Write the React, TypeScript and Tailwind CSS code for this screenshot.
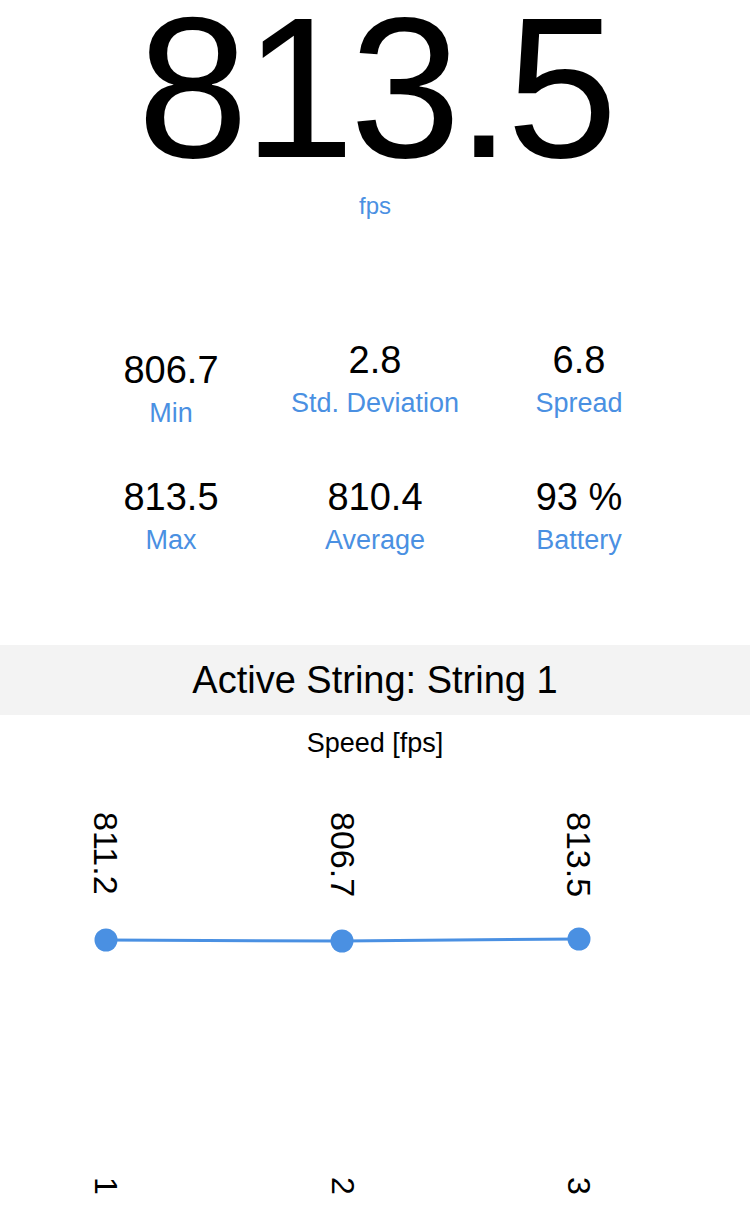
import React from "react";

const stats = [
  [
    { v: "806.7", l: "Min", shift: true },
    { v: "2.8", l: "Std. Deviation", shift: false },
    { v: "6.8", l: "Spread", shift: false },
  ],
  [
    { v: "813.5", l: "Max", shift: false },
    { v: "810.4", l: "Average", shift: false },
    { v: "93 %", l: "Battery", shift: false },
  ],
];

const points = [
  { v: "811.2", x: "1" },
  { v: "806.7", x: "2" },
  { v: "813.5", x: "3" },
];

export default function App() {
  return (
    <div className="w-[750px] h-[1213px] overflow-hidden bg-white text-black font-['Liberation_Sans',Arial,sans-serif]">
      {/* Big value */}
      <div className="h-[176px] text-center text-[200px] leading-[176px] tracking-[-5px]">
        813.5
      </div>
      <div className="mt-[16px] text-center text-[24px] leading-[28px] text-[#4a90e2]">fps</div>

      {/* Stats */}
      <div className="mt-[118px] w-[612px] mx-auto flex flex-col">
        {stats.map((row, ri) => (
          <div key={ri} className={`grid grid-cols-3 items-start ${ri === 1 ? "mt-[46px]" : ""}`}>
            {row.map((s) => (
              <div
                key={s.l}
                className={`flex flex-col items-center ${s.shift ? "mt-[10px]" : ""}`}
              >
                <div className="text-[38px] leading-[44px] whitespace-nowrap">{s.v}</div>
                <div className="mt-[5px] text-[27px] leading-[32px] text-[#4a90e2] whitespace-nowrap">
                  {s.l}
                </div>
              </div>
            ))}
          </div>
        ))}
      </div>

      {/* Active string band */}
      <div className="mt-[89px] h-[70px] bg-[#f3f3f3] flex items-center justify-center text-[38px] leading-[70px]">
        Active String: String 1
      </div>

      <div className="mt-[12px] text-center text-[27px] leading-[32px]">Speed [fps]</div>

      {/* Chart */}
      <div className="relative h-[454px]">
        <svg className="absolute inset-0" width="750" height="454" viewBox="0 0 750 454">
          <polyline
            points="106,181 342,182 579,180"
            fill="none"
            stroke="#4a90e2"
            strokeWidth="3"
          />
          <circle cx="106" cy="181" r="11.5" fill="#4a90e2" />
          <circle cx="342" cy="182" r="11.5" fill="#4a90e2" />
          <circle cx="579" cy="180" r="11.5" fill="#4a90e2" />
        </svg>
        <div className="relative h-full flex justify-between pl-[46px] pr-[111px]">
          {points.map((p) => (
            <div key={p.x} className="w-[120px] h-full flex flex-col items-center">
              <div className="mt-[53px] text-[34px] leading-[34px] [writing-mode:vertical-rl]">
                {p.v}
              </div>
              <div className="mt-auto mb-[18px] text-[32px] leading-[32px] [writing-mode:vertical-rl]">
                {p.x}
              </div>
            </div>
          ))}
        </div>
      </div>
    </div>
  );
}
